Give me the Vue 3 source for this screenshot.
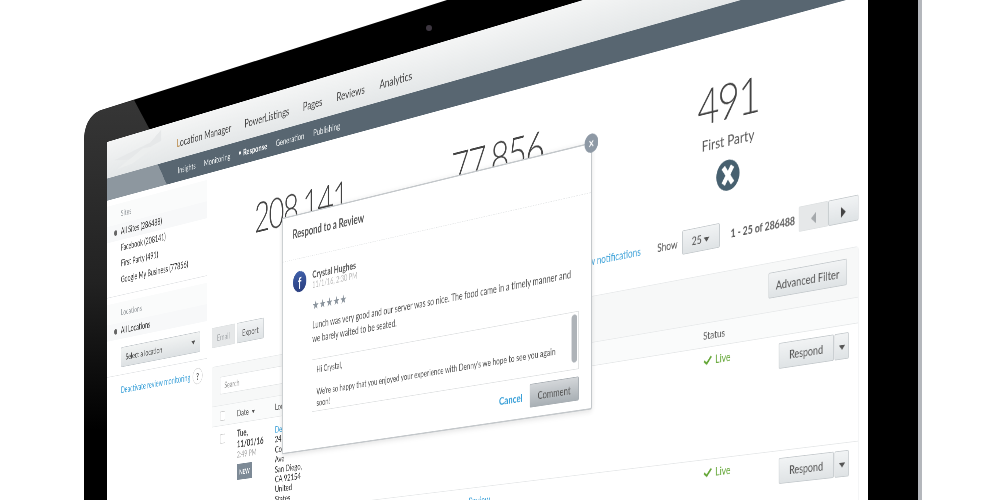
<script setup>
const mainNav = ['Location Manager', 'PowerListings', 'Pages', 'Reviews', 'Analytics']
const subNav = ['Insights', 'Monitoring', 'Response', 'Generation', 'Publishing']
const sites = ['All Sites (286488)', 'Facebook (208141)', 'First Party (491)', 'Google My Business (77856)']
const stats = [
  { value: '208,141', label: 'Facebook' },
  { value: '77,856', label: 'Google My Business' },
  { value: '491', label: 'First Party' },
]
const rows = [
  { id: 1, lines: ['2420', 'Coronado', 'Ave', 'San Diego,', 'CA 92154', 'United', 'States'] },
  { id: 2, lines: ['2420', 'Coronado', 'Ave'], link: '· Review' },
]
</script>

<template>
  <div class="scene">
    <svg class="monitor" viewBox="0 0 1000 500" width="1000" height="500">
      <defs>
        <linearGradient id="edge" x1="0" y1="100" x2="0" y2="430" gradientUnits="userSpaceOnUse">
          <stop offset="0" stop-color="#363636" />
          <stop offset="0.55" stop-color="#222" />
          <stop offset="1" stop-color="#000" />
        </linearGradient>
      </defs>
      <path d="M84 500V142Q84 118 100 110.5L447 0H918V500Z" fill="#000" />
      <path d="M84 500V142Q84 118 100 110.5L134 100L150 130L107 142V500Z" fill="url(#edge)" />
      <rect x="918" y="0" width="4" height="500" fill="#b4b7bc" />
      <circle cx="429" cy="28" r="3" fill="#3d3640" />
    </svg>

    <div class="screen">
      <header class="topbar">
        <svg class="logo" viewBox="0 0 150 60" width="150" height="60">
          <path d="M20 34L120 22L150 6V24L60 40Z" fill="#e6e8e9" />
          <path d="M30 50L100 28L135 30L70 48Z" fill="#eceeee" />
        </svg>
        <a v-for="item in mainNav" :key="item" class="nav-item" :class="{ active: item === 'Reviews' }">{{ item }}</a>
      </header>
      <nav class="subnav">
        <a v-for="item in subNav" :key="item" class="sub-item" :class="{ current: item === 'Response' }">{{ item }}</a>
      </nav>

      <div class="body">
        <aside class="sidebar">
          <div class="side-head first">Sites</div>
          <div
            v-for="(site, i) in sites"
            :key="site"
            class="side-row"
            :class="{ on: i === 0 }"
          >{{ site }}</div>
          <div class="side-rule"></div>

          <div class="side-head second">Locations</div>
          <div class="side-row on">All Locations</div>
          <div class="location-select">
            <span>Select a location</span>
            <i class="caret"></i>
          </div>
          <div class="side-rule"></div>

          <div class="deactivate">
            <a>Deactivate review monitoring</a>
            <span class="help">?</span>
          </div>
        </aside>

        <main class="content">
          <section class="stats">
            <div v-for="stat in stats" :key="stat.value" class="stat">
              <div class="stat-value">{{ stat.value }}</div>
              <div class="stat-label">{{ stat.label }}</div>
              <div class="stat-icon">
                <svg viewBox="0 0 40 40" width="40" height="40">
                  <circle cx="20" cy="20" r="20" fill="#47606f" />
                  <path d="M12 9L28 31M28 9L12 31" stroke="#fff" stroke-width="7" fill="none" />
                </svg>
              </div>
            </div>
          </section>

          <section class="toolbar">
            <button class="btn disabled">Email</button>
            <button class="btn">Export</button>
            <div class="pager">
              <a class="notify">View notifications</a>
              <span class="show">Show</span>
              <button class="btn per-page">25 <i class="caret"></i></button>
              <span class="count">1 - 25 of 286488</span>
              <div class="arrows">
                <button class="btn arrow disabled"><i class="tri left"></i></button>
                <button class="btn arrow"><i class="tri right"></i></button>
              </div>
            </div>
          </section>

          <section class="card">
            <div class="filters">
              <div class="search">Search</div>
              <button class="btn advanced">Advanced Filter</button>
            </div>
            <div class="grid head">
              <div class="cell-check"><span class="check-box"></span></div>
              <div>Date <i class="caret small"></i></div>
              <div>Location</div>
              <div></div>
              <div>Status</div>
              <div></div>
            </div>
            <div v-for="row in rows" :key="row.id" class="grid row">
              <div class="cell-check"><span class="check-box"></span></div>
              <div class="date">
                <div class="day">Tue,</div>
                <div class="day">11/01/16</div>
                <div class="time">2:49 PM</div>
                <span class="new">NEW</span>
              </div>
              <div class="place">
                <a>Denny's</a>
                <div v-for="line in row.lines" :key="line">{{ line }}</div>
              </div>
              <div class="review"><a v-if="row.link">{{ row.link }}</a></div>
              <div class="live">
                <svg viewBox="0 0 18 14" width="16" height="13">
                  <path d="M2 8L7 12L16 2" stroke="#62a534" stroke-width="3" fill="none" />
                </svg>
                Live
              </div>
              <div class="actions">
                <button class="btn respond">Respond</button>
                <button class="btn respond-more"><i class="caret"></i></button>
              </div>
            </div>
          </section>
        </main>
      </div>

      <div class="modal">
        <span class="close">×</span>
        <h3 class="modal-title">Respond to a Review</h3>
        <div class="modal-body">
          <div class="author">
            <span class="fb">f</span>
            <div>
              <div class="author-name">Crystal Hughes</div>
              <div class="author-date">11/1/16, 2:30 PM</div>
            </div>
          </div>
          <div class="stars">★★★★★</div>
          <p class="review-text">Lunch was very good and our server was so nice. The food came in a timely manner and we barely waited to be seated.</p>
          <div class="reply">
            <p>Hi Crystal,</p>
            <p>We're so happy that you enjoyed your experience with Denny's we hope to see you again soon!</p>
            <span class="thumb"></span>
          </div>
          <div class="modal-actions">
            <a class="cancel">Cancel</a>
            <button class="btn comment">Comment</button>
          </div>
        </div>
      </div>
    </div>
  </div>
</template>

<style>
html, body {
  margin: 0;
  background: #fff;
  overflow: hidden;
}
</style>

<style scoped>
.scene {
  position: relative;
  width: 1000px;
  height: 500px;
  overflow: hidden;
  background: #fff;
  font-family: Lato, 'Liberation Sans', sans-serif;
  color: #555;
}

.monitor {
  position: absolute;
  left: 0;
  top: 0;
}

/* the whole app is laid out flat, then tilted onto the monitor */
.screen {
  position: absolute;
  left: 0;
  top: 0;
  width: 1600px;
  height: 1000px;
  background: #fff;
  overflow: hidden;
  filter: blur(0.6px);
  transform-origin: 0 0;
  transform: matrix3d(0.33655, -0.12825, 0, -0.00016025, 0, 0.6, 0, 0, 0, 0, 1, 0, 107, 142, 0, 1);
}

a {
  color: #3aa0d8;
}

i {
  font-style: normal;
}

.topbar {
  position: relative;
  display: flex;
  gap: 33px;
  height: 52px;
  padding: 9px 0 0 191px;
  background: linear-gradient(#f4f5f5, #e4e7e8);
}

.logo {
  position: absolute;
  left: 0;
  top: 0;
}

.nav-item {
  position: relative;
  font-size: 18px;
  line-height: 52px;
  color: #444;
}

.nav-item:first-of-type::first-letter {
  color: #b98a4a;
}

.nav-item.active::after {
  content: '';
  position: absolute;
  left: 50%;
  bottom: -9px;
  margin-left: -6px;
  border: 6px solid transparent;
  border-top: 0;
  border-bottom-color: #586671;
}

.subnav {
  display: flex;
  align-items: center;
  gap: 21px;
  height: 37px;
  padding-left: 194px;
  background: linear-gradient(57deg, #8d979f 138px, #586671 138px);
}

.sub-item {
  font-size: 14px;
  color: #eef1f2;
}

.sub-item.current {
  font-weight: 700;
  color: #fff;
}

.sub-item.current::before {
  content: '';
  display: inline-block;
  width: 5px;
  height: 5px;
  margin: 0 6px 3px 0;
  border-radius: 50%;
  background: #fff;
}

.body {
  display: flex;
}

.sidebar {
  flex: none;
  width: 270px;
  min-height: 902px;
  padding-top: 10px;
  box-sizing: content-box;
  border-right: 1px solid #eceeef;
}

.side-head {
  height: 34px;
  padding-left: 39px;
  font-size: 13px;
  line-height: 34px;
  letter-spacing: 0.5px;
  color: #8f9498;
  background: #fafbfb;
}

.side-row {
  position: relative;
  height: 26.5px;
  padding-left: 39px;
  font-size: 14.5px;
  line-height: 26.5px;
  color: #333;
}

.side-row.on {
  background: #f7f8f9;
}

.side-row.on::before {
  content: '';
  position: absolute;
  left: 20px;
  top: 9px;
  width: 9px;
  height: 9px;
  border-radius: 50%;
  background: #666;
}

.side-rule {
  height: 1px;
  margin-top: 12px;
  background: #e2e4e6;
}

.side-head.second {
  margin-top: 11px;
}

.location-select {
  display: flex;
  align-items: center;
  justify-content: space-between;
  box-sizing: border-box;
  width: 214px;
  height: 33px;
  margin: 14px 0 4px 39px;
  padding: 0 12px;
  border: 1px solid #c4c9cd;
  border-radius: 3px;
  background: linear-gradient(#f1f3f3, #dde1e3);
  font-size: 14px;
  color: #444;
}

.caret {
  display: inline-block;
  width: 0;
  height: 0;
  border-left: 5px solid transparent;
  border-right: 5px solid transparent;
  border-top: 6px solid #555;
  vertical-align: middle;
}

.caret.small {
  border-left-width: 4px;
  border-right-width: 4px;
  border-top-width: 5px;
  margin-left: 4px;
}

.deactivate {
  display: flex;
  align-items: center;
  gap: 10px;
  padding: 12px 0 0 39px;
  font-size: 14.5px;
}

.help {
  display: flex;
  align-items: center;
  justify-content: center;
  box-sizing: border-box;
  width: 26px;
  height: 26px;
  margin-left: -4px;
  border: 1px solid #ccc;
  border-radius: 50%;
  font-size: 15px;
  font-weight: 700;
  color: #555;
}

.content {
  flex: 1;
  min-width: 0;
  padding: 58px 15px 0 12px;
}

.stats {
  display: grid;
  grid-template-columns: repeat(3, 434px);
  margin-left: 2px;
  text-align: center;
}

.stat-value {
  font-size: 66px;
  font-weight: 300;
  line-height: 60px;
  letter-spacing: -3px;
  color: #444;
}

.stat-label {
  margin-top: 7px;
  font-size: 20px;
  line-height: 30px;
  color: #555;
}

.stat-icon {
  height: 40px;
  margin-top: 11px;
}

.toolbar {
  display: flex;
  align-items: center;
  gap: 5px;
  height: 32px;
  margin-top: 42px;
}

.btn {
  box-sizing: border-box;
  height: 32px;
  padding: 0 12px;
  border: 1px solid #c6cbce;
  border-radius: 2px;
  background: linear-gradient(#f1f3f4, #dfe3e5);
  font-family: inherit;
  font-size: 14px;
  color: #555;
}

.btn.disabled {
  border-color: #dfe2e3;
  background: #e6e8e9;
  color: #a5a9ac;
}

.pager {
  display: flex;
  align-items: center;
  margin-left: auto;
  font-size: 15px;
  transform: translateY(-2px);
}

.notify {
  margin-right: 30px;
}

.show {
  margin-right: 8px;
  color: #555;
}

.per-page {
  width: 66px;
  margin-right: 19px;
  font-size: 15px;
}

.count {
  margin-right: 6px;
  font-size: 14.5px;
  font-weight: 700;
  color: #5a5a5a;
}

.arrows {
  display: flex;
}

.arrow {
  width: 48px;
  padding: 0;
}

.tri {
  display: inline-block;
  width: 0;
  height: 0;
  border-top: 7px solid transparent;
  border-bottom: 7px solid transparent;
  vertical-align: middle;
}

.tri.left {
  border-right: 8px solid #a5a9ac;
}

.tri.right {
  border-left: 8px solid #444;
}

.card {
  margin-top: 30px;
  border: 1px solid #e8eaeb;
  border-radius: 4px 4px 0 0;
}

.filters {
  display: flex;
  align-items: center;
  justify-content: space-between;
  height: 63px;
  padding: 0 17px 0 20px;
  background: #f7f8f8;
  border-bottom: 1px solid #e8eaeb;
  box-sizing: border-box;
}

.search {
  box-sizing: border-box;
  width: 420px;
  height: 28px;
  padding-left: 10px;
  border: 1px solid #e3e5e6;
  border-radius: 2px;
  background: #fff;
  font-size: 13px;
  line-height: 26px;
  color: #999;
}

.advanced {
  width: 128px;
  height: 33px;
  margin-top: -5px;
  padding: 0;
  font-size: 15px;
}

.grid {
  display: grid;
  grid-template-columns: 63px 94px 120px 766px 129px 1fr;
}

.grid.head {
  align-items: center;
  height: 31px;
  background: #fafbfb;
  border-bottom: 1px solid #e6e8e9;
  font-size: 14px;
  color: #555;
}

.grid.row {
  height: 147px;
  overflow: hidden;
  box-sizing: border-box;
  padding-top: 9px;
  border-bottom: 1px solid #e6e8e9;
}

.cell-check {
  padding-left: 20px;
}

.check-box {
  display: inline-block;
  box-sizing: border-box;
  width: 13px;
  height: 15px;
  border: 1px solid #c8c8c8;
  border-radius: 2px;
  background: #fff;
  vertical-align: middle;
}

.date {
  margin-top: -2px;
}

.day {
  font-size: 15px;
  font-weight: 700;
  line-height: 17px;
  color: #444;
}

.time {
  font-size: 13px;
  line-height: 17px;
  color: #aaa;
}

.new {
  display: inline-block;
  width: 38px;
  height: 25px;
  margin-top: 6px;
  background: #7d8a96;
  font-size: 11px;
  font-weight: 700;
  line-height: 25px;
  text-align: center;
  color: #fff;
}

.place {
  margin-top: 2px;
  font-size: 14px;
  line-height: 15.4px;
  color: #333;
}

.review {
  padding-right: 404px;
  text-align: right;
  font-size: 14px;
}

.live {
  display: flex;
  align-items: center;
  gap: 5px;
  height: 14px;
  margin-top: 0;
  font-size: 15px;
  color: #62a534;
}

.actions {
  display: flex;
  gap: 1px;
}

.respond {
  width: 90px;
  height: 33px;
  padding: 0;
  font-size: 14.5px;
}

.respond-more {
  width: 23px;
  height: 33px;
  padding: 0;
}

.modal {
  position: absolute;
  left: 458px;
  top: 198px;
  box-sizing: border-box;
  width: 666px;
  height: 365px;
  border: 2px solid #c4c8cb;
  border-radius: 3px;
  background: #fff;
  box-shadow: 0 2px 8px rgba(0, 0, 0, 0.12);
}

.close {
  position: absolute;
  right: -14px;
  top: -14px;
  width: 26px;
  height: 26px;
  border-radius: 50%;
  background: #8e99a5;
  font-size: 18px;
  font-weight: 700;
  line-height: 26px;
  text-align: center;
  color: #fff;
}

.modal-title {
  box-sizing: border-box;
  height: 67px;
  margin: 0;
  padding-left: 24px;
  border-bottom: 1px dashed #e4e6e7;
  font-size: 18px;
  font-weight: 700;
  line-height: 54px;
  color: #555;
}

.modal-body {
  padding: 19px 23px 0 25px;
}

.author {
  display: flex;
  align-items: flex-start;
  gap: 14px;
  height: 34px;
}

.fb {
  flex: none;
  width: 32px;
  height: 32px;
  border-radius: 50%;
  background: linear-gradient(#3f5fa8, #2b3f80);
  font-size: 24px;
  font-weight: 700;
  line-height: 36px;
  text-align: center;
  color: #fff;
}

.author-name {
  font-size: 15px;
  font-weight: 700;
  line-height: 18px;
  color: #555;
}

.author-date {
  margin-top: -1px;
  font-size: 13px;
  line-height: 17px;
  color: #bbb;
}

.stars {
  margin: 11px 0 0 46px;
  font-family: 'DejaVu Sans', sans-serif;
  font-size: 18px;
  line-height: 24px;
  letter-spacing: 0;
  color: #8b949d;
}

.review-text {
  width: 565px;
  margin: 6.5px 0 0 46px;
  font-size: 14.5px;
  line-height: 21px;
  color: #555;
}

.reply {
  position: relative;
  box-sizing: border-box;
  width: 569px;
  height: 80px;
  margin: 21.5px 0 0 45px;
  padding: 7px 10px;
  overflow: hidden;
  border: 1px solid #dfe1e2;
  font-size: 13.2px;
  line-height: 17px;
  color: #555;
}

.reply p {
  margin: 0 0 17px;
  width: 535px;
}

.thumb {
  position: absolute;
  right: 2px;
  top: 3px;
  width: 11px;
  height: 66px;
  border-radius: 6px;
  background: #aeb3b8;
}

.modal-actions {
  display: flex;
  align-items: center;
  justify-content: flex-end;
  gap: 14px;
  width: 569px;
  margin: 10px 0 0 45px;
}

.cancel {
  font-size: 16px;
  font-weight: 700;
}

.comment {
  width: 96px;
  height: 33px;
  padding: 0;
  border-color: #a9afb4;
  background: linear-gradient(#d3d6d9, #a9b0b5);
  font-size: 15px;
}
</style>
